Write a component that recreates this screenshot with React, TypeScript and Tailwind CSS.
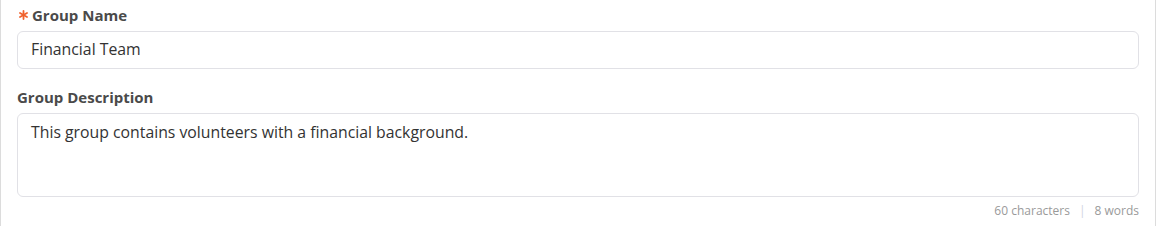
function Asterisk() {
  return (
    <svg width="9" height="10" viewBox="0 0 9 10" className="mr-[4px]" aria-hidden="true">
      <g stroke="#f0622e" strokeWidth="1.8" strokeLinecap="round">
        <line x1="4.5" y1="1" x2="4.5" y2="9" />
        <line x1="1" y1="3" x2="8" y2="7" />
        <line x1="1" y1="7" x2="8" y2="3" />
      </g>
    </svg>
  );
}

export default function App() {
  return (
    <div className="w-[1156px] h-[226px] bg-white border-x border-[#dcdcdc] font-['Open_Sans',sans-serif] text-[#333]">
      <div className="px-4 pt-[5px]">
        <label className="flex items-center h-5 pl-[2px] text-[15px] font-bold text-[#4a4a4a]">
          <Asterisk />
          Group Name
        </label>
        <div className="mt-[6px] h-[38px] border border-[#e1e1e6] rounded-md flex items-center px-[13px] text-[15.8px]">
          Financial Team
        </div>
        <label className="flex items-center h-5 mt-[18px] text-[15px] font-bold text-[#4a4a4a]">
          Group Description
        </label>
        <div className="mt-[6px] h-[84px] border border-[#e1e1e6] rounded-md px-[13px] pt-[7px] text-[15.8px]">
          This group contains volunteers with a financial background.
        </div>
        <div className="flex justify-end items-center gap-[9px] mt-[5px] text-[12px] text-[#9a9a9a]">
          <span>60 characters</span>
          <span className="text-[#d0d4de]">|</span>
          <span>8 words</span>
        </div>
      </div>
    </div>
  );
}
